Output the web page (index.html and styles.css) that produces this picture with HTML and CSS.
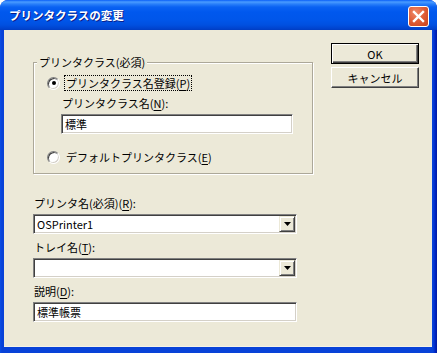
FILE: index.html
```html
<!DOCTYPE html>
<html lang="ja">
<head>
<meta charset="utf-8">
<link rel="stylesheet" href="styles.css">
</head>
<body>
<div class="window">
  <div class="titlebar">
    <span class="title">プリンタクラスの変更</span>
    <span class="close">
      <svg width="21" height="21" viewBox="0 0 21 21"><path d="M6 6 L15 15 M15 6 L6 15" stroke="#fff" stroke-width="2.4" stroke-linecap="square"/></svg>
    </span>
  </div>
  <div class="client">
    <div class="form">
      <fieldset class="group">
        <legend>プリンタクラス(必須)</legend>
        <div class="radio-row first"><span class="radio checked"></span><span class="focus">プリンタクラス名登録(<u>P</u>)</span></div>
        <div class="field inset">
          <label>プリンタクラス名(<u>N</u>):</label>
          <div class="input short">標準</div>
        </div>
        <div class="radio-row second"><span class="radio"></span><span class="rlabel">デフォルトプリンタクラス(<u>E</u>)</span></div>
      </fieldset>
      <div class="field block first-block">
        <label>プリンタ名(必須)(<u>R</u>):</label>
        <div class="input combo"><span class="val">OSPrinter1</span><span class="drop"><svg width="7" height="4" viewBox="0 0 7 4"><polygon points="0,0 7,0 3.5,4" fill="#000"/></svg></span></div>
      </div>
      <div class="field block">
        <label>トレイ名(<u>T</u>):</label>
        <div class="input combo"><span class="val"></span><span class="drop"><svg width="7" height="4" viewBox="0 0 7 4"><polygon points="0,0 7,0 3.5,4" fill="#000"/></svg></span></div>
      </div>
      <div class="field block">
        <label>説明(<u>D</u>):</label>
        <div class="input wide">標準帳票</div>
      </div>
    </div>
    <div class="buttons">
      <div class="btn default">OK</div>
      <div class="btn">キャンセル</div>
    </div>
  </div>
</div>
</body>
</html>
```
FILE: styles.css
```css
html, body { margin: 0; padding: 0; background: #fff; }

.window {
  width: 437px;
  height: 353px;
  box-sizing: border-box;
  background: linear-gradient(to right, #0A4EE4 0, #0842D8 2px, #0842D8 433px, #0028C8 435px, #001A9E 437px);
  border-radius: 8px 8px 0 0;
  display: flex;
  flex-direction: column;
  overflow: hidden;
  font-family: "Noto Sans CJK JP", "Noto Sans", sans-serif;
}

.titlebar {
  height: 30px;
  flex: none;
  display: flex;
  align-items: center;
  justify-content: space-between;
  padding: 0 8px 0 9px;
  box-sizing: border-box;
  background: linear-gradient(to bottom, #0A5FF8 0, #4A9CFF 2px, #2A80FA 4px, #0A62F2 7px, #0058EE 12px, #0056EA 20px, #0050E0 25px, #0042CC 29px, #003CC0 30px);
}

.title {
  color: #fff;
  font-weight: bold;
  font-size: 11.5px;
  text-shadow: 1px 1px 0 #0A1E8A;
  letter-spacing: 0;
}

.close {
  width: 21px;
  height: 21px;
  box-sizing: border-box;
  border: 1px solid #fff;
  border-radius: 3px;
  background: radial-gradient(circle at 35% 30%, #F08A6A 0, #E0603A 45%, #C8401A 100%);
  display: flex;
  align-items: center;
  justify-content: center;
  margin-top: 2px;
}
.close svg { display: block; margin: -1px; }

.client {
  flex: 1;
  margin: 0 5px 6px 4px;
  background: #ECE9D8;
  display: flex;
  align-items: flex-start;
  gap: 18px;
  padding-left: 29px;
  font-size: 11px;
  color: #000;
  box-shadow: inset 0 -1px 0 #F4F2E8;
}

.form {
  width: 280px;
  padding-top: 25px;
  display: flex;
  flex-direction: column;
}

u { text-decoration-thickness: 1px; text-underline-offset: 2px; }

.group {
  margin: 0;
  padding: 6px 0 8px 0;
  width: 280px;
  box-sizing: border-box;
  min-width: 0;
  border: 1px solid #ACA899;
  box-shadow: inset 1px 1px 0 #fff, 1px 1px 0 #fff;
}
.group legend {
  padding: 0 2px;
  margin-left: 3px;
  line-height: 14px;
  background: #ECE9D8;
}

.radio-row {
  display: flex;
  align-items: center;
  gap: 5px;
  height: 16px;
  margin-left: 13px;
}
.radio-row.second { margin-top: 15px; }

.radio {
  width: 13px;
  height: 13px;
  box-sizing: border-box;
  border-radius: 50%;
  background: #fff;
  border: 1px solid;
  border-color: #808080 #fff #fff #808080;
  box-shadow: inset 1px 1px 0 #404040, inset -1px -1px 0 #D4D0C8;
  display: flex;
  align-items: center;
  justify-content: center;
  flex: none;
}
.radio.checked::after {
  content: "";
  width: 4px;
  height: 4px;
  border-radius: 50%;
  background: #000;
}

.focus {
  outline: 1px dotted #000;
  padding: 0 1px;
  line-height: 14px;
}
.rlabel { line-height: 14px; padding: 0 1px; }

.field label {
  display: block;
  line-height: 14px;
  margin-bottom: 4px;
  padding-left: 1px;
}
.field.inset { margin-left: 27px; margin-top: 5px; }
.field.block { margin-top: 6px; }
.field.first-block { margin-top: 22px; }

.input {
  height: 20px;
  box-sizing: border-box;
  background: #fff;
  border: 1px solid;
  border-color: #808080 #fff #fff #808080;
  box-shadow: inset 1px 1px 0 #404040, inset -1px -1px 0 #D4D0C8;
  padding: 0 3px;
  display: flex;
  align-items: center;
  line-height: 14px;
}
.input.short { width: 232px; }
.input.wide { width: 264px; }
.input.combo { width: 264px; padding: 1px 1px 1px 3px; }
.combo .val { flex: 1; }

.drop {
  width: 16px;
  height: 16px;
  box-sizing: border-box;
  background: #ECE9D8;
  border: 1px solid;
  border-color: #ECE9D8 #404040 #404040 #ECE9D8;
  box-shadow: inset 1px 1px 0 #fff, inset -1px -1px 0 #808080;
  display: flex;
  align-items: center;
  justify-content: center;
  flex: none;
}
.drop svg { display: block; }

.buttons {
  width: 88px;
  padding-top: 13px;
  display: flex;
  flex-direction: column;
  gap: 3px;
}
.btn {
  height: 21px;
  box-sizing: border-box;
  background: #ECE9D8;
  border: 1px solid;
  border-color: #fff #404040 #404040 #fff;
  box-shadow: inset -1px -1px 0 #808080;
  display: flex;
  align-items: center;
  justify-content: center;
  font-size: 11px;
  line-height: 14px;
}
.btn.default {
  border: 1px solid #000;
  box-shadow: inset 1px 1px 0 #fff, inset -1px -1px 0 #404040, inset -2px -2px 0 #808080;
}
```
